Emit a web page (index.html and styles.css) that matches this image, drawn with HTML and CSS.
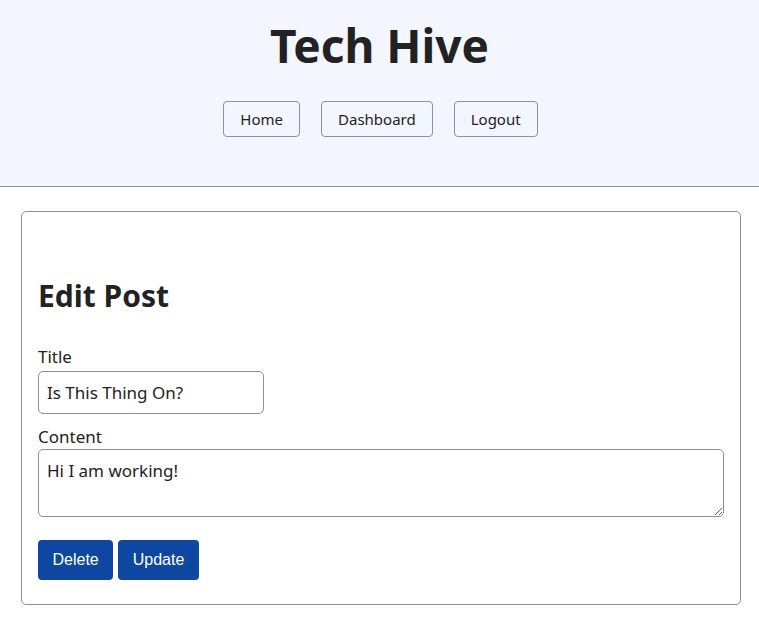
FILE: index.html
```html
<!DOCTYPE html>
<html lang="en">
<head>
<meta charset="utf-8">
<title>Tech Hive</title>
<link rel="stylesheet" href="styles.css">
</head>
<body>
<header class="site-header">
  <h1 class="site-title">Tech Hive</h1>
  <nav class="nav">
    <a class="nav-btn" href="#">Home</a>
    <a class="nav-btn" href="#">Dashboard</a>
    <a class="nav-btn" href="#">Logout</a>
  </nav>
</header>
<main class="main">
  <section class="card">
    <h2 class="card-title">Edit Post</h2>
    <form class="form">
      <label class="label" for="title">Title</label>
      <input class="input" id="title" type="text" value="Is This Thing On?">
      <label class="label" for="content">Content</label>
      <textarea class="textarea" id="content">Hi I am working!</textarea>
      <div class="actions">
        <button class="btn" type="button">Delete</button>
        <button class="btn" type="button">Update</button>
      </div>
    </form>
  </section>
</main>
</body>
</html>
```
FILE: styles.css
```css
html, body {
  margin: 0;
  padding: 0;
  background: #ffffff;
  color: #222222;
  font-family: "Noto Sans", "Open Sans", sans-serif;
}

.site-header {
  background: #f3f6fe;
  border-bottom: 1px solid #8b8fa8;
  height: 187px;
  box-sizing: border-box;
  display: flex;
  flex-direction: column;
  align-items: center;
  padding-top: 13px;
}

.site-title {
  margin: 0;
  font-size: 46px;
  font-weight: 700;
  line-height: 64px;
  color: #222222;
}

.nav {
  display: flex;
  gap: 21px;
  margin-top: 24px;
  padding-left: 2px;
}

.nav-btn {
  display: inline-flex;
  align-items: center;
  justify-content: center;
  height: 36px;
  box-sizing: border-box;
  padding: 0 16px;
  border: 1px solid #8b8fa8;
  border-radius: 4px;
  font-size: 15px;
  color: #222222;
  text-decoration: none;
  background: transparent;
}

.main {
  padding: 24px 18px 17px 21px;
}

.card {
  border: 1px solid #8b8fa8;
  border-radius: 5px;
  padding: 62px 16px 24px 16px;
}

.card-title {
  margin: 0 0 27px 0;
  font-size: 30px;
  font-weight: 700;
  line-height: 44px;
  color: #222222;
}

.form {
  display: flex;
  flex-direction: column;
  align-items: flex-start;
}

.label {
  font-size: 17px;
  line-height: 24px;
}

.input {
  width: 226px;
  height: 43px;
  box-sizing: border-box;
  border: 1px solid #8b8fa8;
  border-radius: 5px;
  padding: 0 8px;
  font-family: inherit;
  font-size: 17px;
  color: #222222;
  margin: 2px 0 11px 0;
}

.textarea {
  width: 100%;
  height: 68px;
  box-sizing: border-box;
  border: 1px solid #8b8fa8;
  border-radius: 5px;
  padding: 9px 8px 4px 8px;
  font-family: inherit;
  font-size: 17px;
  line-height: 24px;
  color: #222222;
  resize: vertical;
  margin: 0;
}

.actions {
  display: flex;
  gap: 5px;
  margin-top: 23px;
}

.btn {
  height: 40px;
  padding: 0 14.5px;
  border: none;
  border-radius: 4px;
  background: #0d47a1;
  color: #ffffff;
  font-family: "Liberation Sans", Arial, sans-serif;
  font-size: 16px;
  cursor: pointer;
}
```
